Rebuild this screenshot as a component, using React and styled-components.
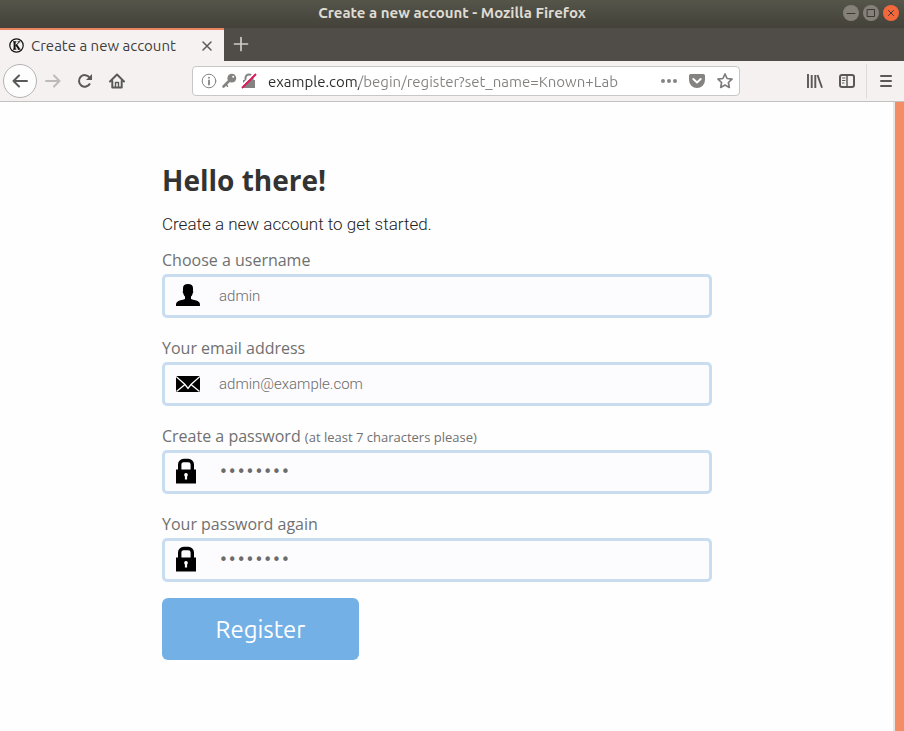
import React from "react";
import styled, { createGlobalStyle } from "styled-components";

const chromeFont = `Ubuntu, "Noto Sans", "Open Sans", sans-serif`;
const pageFont = `"Open Sans", "Noto Sans", sans-serif`;
const lightFont = `Roboto, "Liberation Sans", Arial, sans-serif`;

const GlobalStyle = createGlobalStyle`
  *, *::before, *::after { box-sizing: border-box; }
  body { margin: 0; background: #fefefe; }
  button, input { font: inherit; margin: 0; }
`;

const Window = styled.div`
  min-height: 100vh;
  display: flex;
  flex-direction: column;
  font-family: ${chromeFont};
`;

const TitleBar = styled.header`
  height: 28px;
  display: grid;
  grid-template-columns: 1fr auto 1fr;
  align-items: center;
  padding: 0 5px 2px;
  background: linear-gradient(#55554a, #434139);
  color: #dfdbd2;
`;

const WindowTitle = styled.div`
  grid-column: 2;
  font-size: 15px;
  line-height: 20px;
  font-weight: 700;
`;

const WindowControls = styled.div`
  display: flex;
  justify-content: flex-end;
  gap: 4px;
`;

const ControlButton = styled.button`
  width: 16px;
  height: 16px;
  padding: 0;
  border: 0;
  border-radius: 50%;
  display: grid;
  place-items: center;
  color: #3a3934;
  background: ${(p) => (p.$close ? "#f2683c" : "#858179")};
`;

const TabStrip = styled.div`
  height: 33px;
  display: flex;
  background: #504c47;
`;

const Tab = styled.div`
  width: 224px;
  display: flex;
  align-items: center;
  padding: 0 8px 0 9px;
  border-top: 2px solid #e8855f;
  background: #f6f2f2;
  color: #3f3e3c;
`;

const TabTitle = styled.span`
  flex: 1;
  margin-left: 7px;
  font-size: 15px;
  line-height: 20px;
  white-space: nowrap;
`;

const IconButton = styled.button`
  width: ${(p) => p.$width || 32}px;
  height: 32px;
  padding: 0;
  border: 0;
  flex: none;
  display: grid;
  place-items: center;
  background: none;
  color: ${(p) => p.$color || "#5a5958"};
`;

const TabClose = styled(IconButton)`
  width: 18px;
  height: 18px;
`;

const NavBar = styled.nav`
  height: 41px;
  display: flex;
  align-items: center;
  padding-left: 3px;
  background: #f5f1f1;
  border-bottom: 1px solid #c4c1c1;
`;

const BackButton = styled(IconButton)`
  width: 34px;
  height: 34px;
  border: 1px solid #b5b2b2;
  border-radius: 50%;
  background: #fdfdfd;
`;

const AddressBar = styled.div`
  flex: 1;
  min-width: 0;
  height: 30px;
  margin: 0 59px;
  padding: 0 0 0 6px;
  display: flex;
  align-items: center;
  border: 1px solid #c9c6c6;
  border-radius: 4px;
  background: #fff;
`;

const AddressInput = styled.input`
  flex: 1;
  min-width: 0;
  height: 26px;
  padding: 0;
  margin-left: 9px;
  border: 0;
  outline: 0;
  font-size: 15px;
  color: transparent;
  background: linear-gradient(90deg, #2c2b2a 91px, #83817f 91px);
  background-clip: text;
`;

const Divider = styled.span`
  width: 1px;
  height: 34px;
  margin-left: 3px;
  background: #dedada;
`;

const Viewport = styled.main`
  flex: 1;
  display: flex;
  justify-content: center;
  padding: 56px 21px 60px 0;
  border-right: 9px solid #f28d66;
  background: linear-gradient(90deg, #fefefe calc(100% - 2px), #e9e6e4 0);
  font-family: ${pageFont};
`;

const Form = styled.form`
  width: 100%;
  max-width: 550px;
`;

const Heading = styled.h1`
  margin: 0;
  font-size: 28px;
  line-height: 44px;
  font-weight: 700;
  color: #333;
`;

const Intro = styled.p`
  margin: 8px 0 10px;
  font-family: ${lightFont};
  font-size: 17px;
  font-weight: 300;
  line-height: 28px;
  color: #222;
`;

const Fields = styled.div`
  display: grid;
  gap: 18px;
  margin-bottom: 16px;
`;

const Label = styled.label`
  display: block;
  height: 24px;
  margin-bottom: 2px;
  font-size: 16px;
  line-height: 24px;
  color: #707070;

  small { font-size: 13px; }
`;

const InputFrame = styled.div`
  height: 44px;
  display: flex;
  align-items: center;
  border: 3px solid #c8ddef;
  border-radius: 5px;
  background: #fcfbfe;
`;

const FieldIcon = styled.svg`
  flex: none;
  width: 24px;
  height: 26px;
  margin: 0 19px 2px 11px;
  fill: #000;
`;

const TextInput = styled.input`
  flex: 1;
  min-width: 0;
  height: 36px;
  padding: 0;
  border: 0;
  outline: 0;
  background: none;
  font-family: ${(p) => (p.type === "password" ? `"DejaVu Sans", sans-serif` : lightFont)};
  font-size: 15px;
  font-weight: ${(p) => (p.type === "password" ? 400 : 300)};
  color: #444;

  &::placeholder { color: #6b6b6b; opacity: 1; }
`;

const RegisterButton = styled.button`
  width: 197px;
  height: 62px;
  padding: 2px 0 0;
  border: 0;
  border-radius: 6px;
  background: #73b0e6;
  color: #fff;
  font-family: ${chromeFont};
  font-size: 24px;
  font-weight: 400;
  line-height: 32px;
`;

const Line = ({ size = 16, width = 2, children, ...rest }) => (
  <svg width={size} height={size} viewBox="0 0 16 16" fill="none" stroke="currentColor"
    strokeWidth={width} strokeLinecap="round" strokeLinejoin="round" aria-hidden="true" {...rest}>
    {children}
  </svg>
);

const KnownLogo = () => (
  <svg width="15" height="15" viewBox="0 0 15 15" fill="none" stroke="#111" aria-hidden="true">
    <circle cx="7.5" cy="7.5" r="6.7" strokeWidth="1.2" />
    <path d="M5.6 3.8v7.4" strokeWidth="2" />
    <path d="M4 3.8h3.4M4 11.2h3.4M8.6 3.8h2.6M8.8 11.2h2.8M10.4 4L6.6 7.6" strokeWidth="1" />
    <path d="M7.2 6.8l3 4.3" strokeWidth="1.9" />
  </svg>
);

const PersonIcon = () => (
  <FieldIcon viewBox="0 0 24 26" aria-hidden="true">
    <path d="M12 2C8.800 2 7 3.300 7 6v3c-.4.600-.3 2.100.4 2.500.2 1.400.8 2.300 1.600 3v2.500C6.500 18 2.500 18.300.8 20.200.1 21 0 22.300 0 24h24c0-1.700-.1-3-.8-3.800-1.700-1.900-5.700-2.200-8.200-3.200v-2.500c.8-.7 1.400-1.600 1.600-3 .7-.4.800-1.900.4-2.500V6c0-2.700-1.800-4-5-4z" />
  </FieldIcon>
);

const MailIcon = () => (
  <FieldIcon viewBox="0 0 24 26" aria-hidden="true">
    <path d="M0 6h24v16H0z" />
    <path d="M0 6.500L9 14.500 12 18.500 15 14.500 24 6.500M9 14.500L.5 21.500M15 14.500L23.500 21.500" fill="none" stroke="#fff" strokeWidth="1.300" />
  </FieldIcon>
);

const LockIcon = () => (
  <FieldIcon viewBox="0 0 24 26" aria-hidden="true">
    <path d="M3.700 13V6.500a4 4 0 0 1 4-4h4.600a4 4 0 0 1 4 4V13" fill="none" stroke="#000" strokeWidth="3.400" />
    <path d="M0 11.500h20V25.500H0z" />
    <path d="M10 15a1.900 1.900 0 0 0-1.100 3.400V21.500h2.200v-3.100A1.900 1.900 0 0 0 10 15z" fill="#fff" />
  </FieldIcon>
);

const fields = [
  { id: "username", label: "Choose a username", placeholder: "admin", type: "text", Icon: PersonIcon },
  { id: "email", label: "Your email address", placeholder: "admin@example.com", type: "email", Icon: MailIcon },
  { id: "password", label: "Create a password", note: "(at least 7 characters please)", placeholder: "••••••••", type: "password", Icon: LockIcon },
  { id: "password2", label: "Your password again", placeholder: "••••••••", type: "password", Icon: LockIcon },
];

export default function App() {
  return (
    <Window>
      <GlobalStyle />
      <TitleBar>
        <WindowTitle>Create a new account - Mozilla Firefox</WindowTitle>
        <WindowControls>
          <ControlButton aria-label="Minimize">
            <Line width={1}><path d="M4 8.500h8" /></Line>
          </ControlButton>
          <ControlButton aria-label="Maximize">
            <Line width={1} strokeLinejoin="miter"><path d="M4.500 4.500h7v7h-7z" /></Line>
          </ControlButton>
          <ControlButton $close aria-label="Close window">
            <Line width={1}><path d="M5.500 5.500l5 5M10.500 5.500l-5 5" /></Line>
          </ControlButton>
        </WindowControls>
      </TitleBar>

      <TabStrip>
        <Tab>
          <KnownLogo />
          <TabTitle>Create a new account</TabTitle>
          <TabClose aria-label="Close tab">
            <Line width={1.5}><path d="M4 4l8 8M12 4l-8 8" /></Line>
          </TabClose>
        </Tab>
        <IconButton aria-label="New tab" $width={34} $color="#d0cdc8">
          <Line width={1.7}><path d="M8 1.500v13M1.500 8h13" /></Line>
        </IconButton>
      </TabStrip>

      <NavBar>
        <BackButton aria-label="Back">
          <Line><path d="M15 8H1.500M7 2.500L1.500 8 7 13.500" /></Line>
        </BackButton>
        <IconButton aria-label="Forward" $color="#bdbaba">
          <Line><path d="M1 8h13.500M9 2.500L14.500 8 9 13.500" /></Line>
        </IconButton>
        <IconButton aria-label="Reload">
          <Line strokeLinecap="butt">
            <path d="M13 10.500A5.800 5.800 0 1 1 12.500 4.500" />
            <path d="M15 1v6H9z" fill="currentColor" stroke="none" />
          </Line>
        </IconButton>
        <IconButton aria-label="Home">
          <Line>
            <path d="M1 8.500L8 1.500l7 7M3.300 8v6.500h9.400V8" />
            <path d="M6.500 14V9.500h3V14" strokeWidth="1.400" />
          </Line>
        </IconButton>

        <AddressBar>
          <IconButton aria-label="Site information" $width={20} $color="#858382">
            <Line size={16} width={1}>
              <circle cx="8" cy="8" r="6.800" />
              <path d="M8 7.500v4M8 4.600v.2" strokeWidth="1.800" />
            </Line>
          </IconButton>
          <IconButton aria-label="Saved login" $width={20} $color="#858382">
            <Line width={3}>
              <circle cx="10.800" cy="5.200" r="4.400" fill="currentColor" stroke="none" />
              <path d="M9 7L2.500 13.500" strokeWidth="2.600" />
              <path d="M5.500 12l1 1.200" strokeWidth="1.600" />
              <circle cx="12.200" cy="3.800" r="1" fill="#fff" stroke="none" />
            </Line>
          </IconButton>
          <IconButton aria-label="Connection not secure" $width={20} $color="#858382">
            <Line strokeLinecap="butt">
              <path d="M4.500 8V5a3.500 3.500 0 0 1 7 0v3" />
              <path d="M2 7h12v8H2z" fill="currentColor" stroke="none" />
              <path d="M0 13.500L13.500 0" stroke="#fff" strokeWidth="2" />
              <path d="M1 15L15 1" stroke="#dc1b5c" strokeWidth="2" />
            </Line>
          </IconButton>
          <AddressInput aria-label="Address" readOnly value="example.com/begin/register?set_name=Known+Lab" />
          <IconButton aria-label="Page actions" $width={28} $color="#858382">
            <svg width="16" height="16" fill="currentColor" aria-hidden="true">
              <circle cx="2" cy="8" r="2" /><circle cx="8" cy="8" r="2" /><circle cx="14" cy="8" r="2" />
            </svg>
          </IconButton>
          <IconButton aria-label="Save to Pocket" $width={28} $color="#858382">
            <svg width="16" height="16" fill="currentColor" aria-hidden="true">
              <path d="M1.800 1h12.400A1.800 1.800 0 0 1 16 2.800V7a8 8 0 0 1-16 0V2.800A1.800 1.800 0 0 1 1.800 1z" />
              <path d="M4.300 6L8 9.500 11.700 6" fill="none" stroke="#fff" strokeWidth="1.900" strokeLinecap="round" strokeLinejoin="round" />
            </svg>
          </IconButton>
          <IconButton aria-label="Bookmark this page" $width={28} $color="#7e7c7b">
            <Line width={1.7}><path d="M8 1l2.100 4.500 4.900.6-3.600 3.400.9 4.900L8 12l-4.300 2.400.9-4.900L1 6.100l4.900-.6z" /></Line>
          </IconButton>
        </AddressBar>

        <IconButton aria-label="Library">
          <Line strokeLinecap="butt"><path d="M1 1v14M4.700 2v13M8.300 2v13M10.500 2l4.500 12.700" strokeWidth="1.900" /></Line>
        </IconButton>
        <IconButton aria-label="Sidebars">
          <Line>
            <rect x="1" y="2" width="14" height="12" rx="2" />
            <path d="M8 2v12" strokeWidth="1.500" />
            <path d="M3.500 5h2.500M3.500 7.500h2.500M3.500 10h1.500" strokeWidth="1" />
          </Line>
        </IconButton>
        <Divider />
        <IconButton aria-label="Menu" $width={37}>
          <Line><path d="M3 3h10M3 8h10M3 13h10" /></Line>
        </IconButton>
      </NavBar>

      <Viewport>
        <Form onSubmit={(e) => e.preventDefault()}>
          <Heading>Hello there!</Heading>
          <Intro>Create a new account to get started.</Intro>
          <Fields>
            {fields.map(({ id, label, note, placeholder, type, Icon }) => (
              <div key={id}>
                <Label htmlFor={id}>
                  {label} {note && <small>{note}</small>}
                </Label>
                <InputFrame>
                  <Icon />
                  <TextInput id={id} type={type} placeholder={placeholder} />
                </InputFrame>
              </div>
            ))}
          </Fields>
          <RegisterButton type="submit">Register</RegisterButton>
        </Form>
      </Viewport>
    </Window>
  );
}
